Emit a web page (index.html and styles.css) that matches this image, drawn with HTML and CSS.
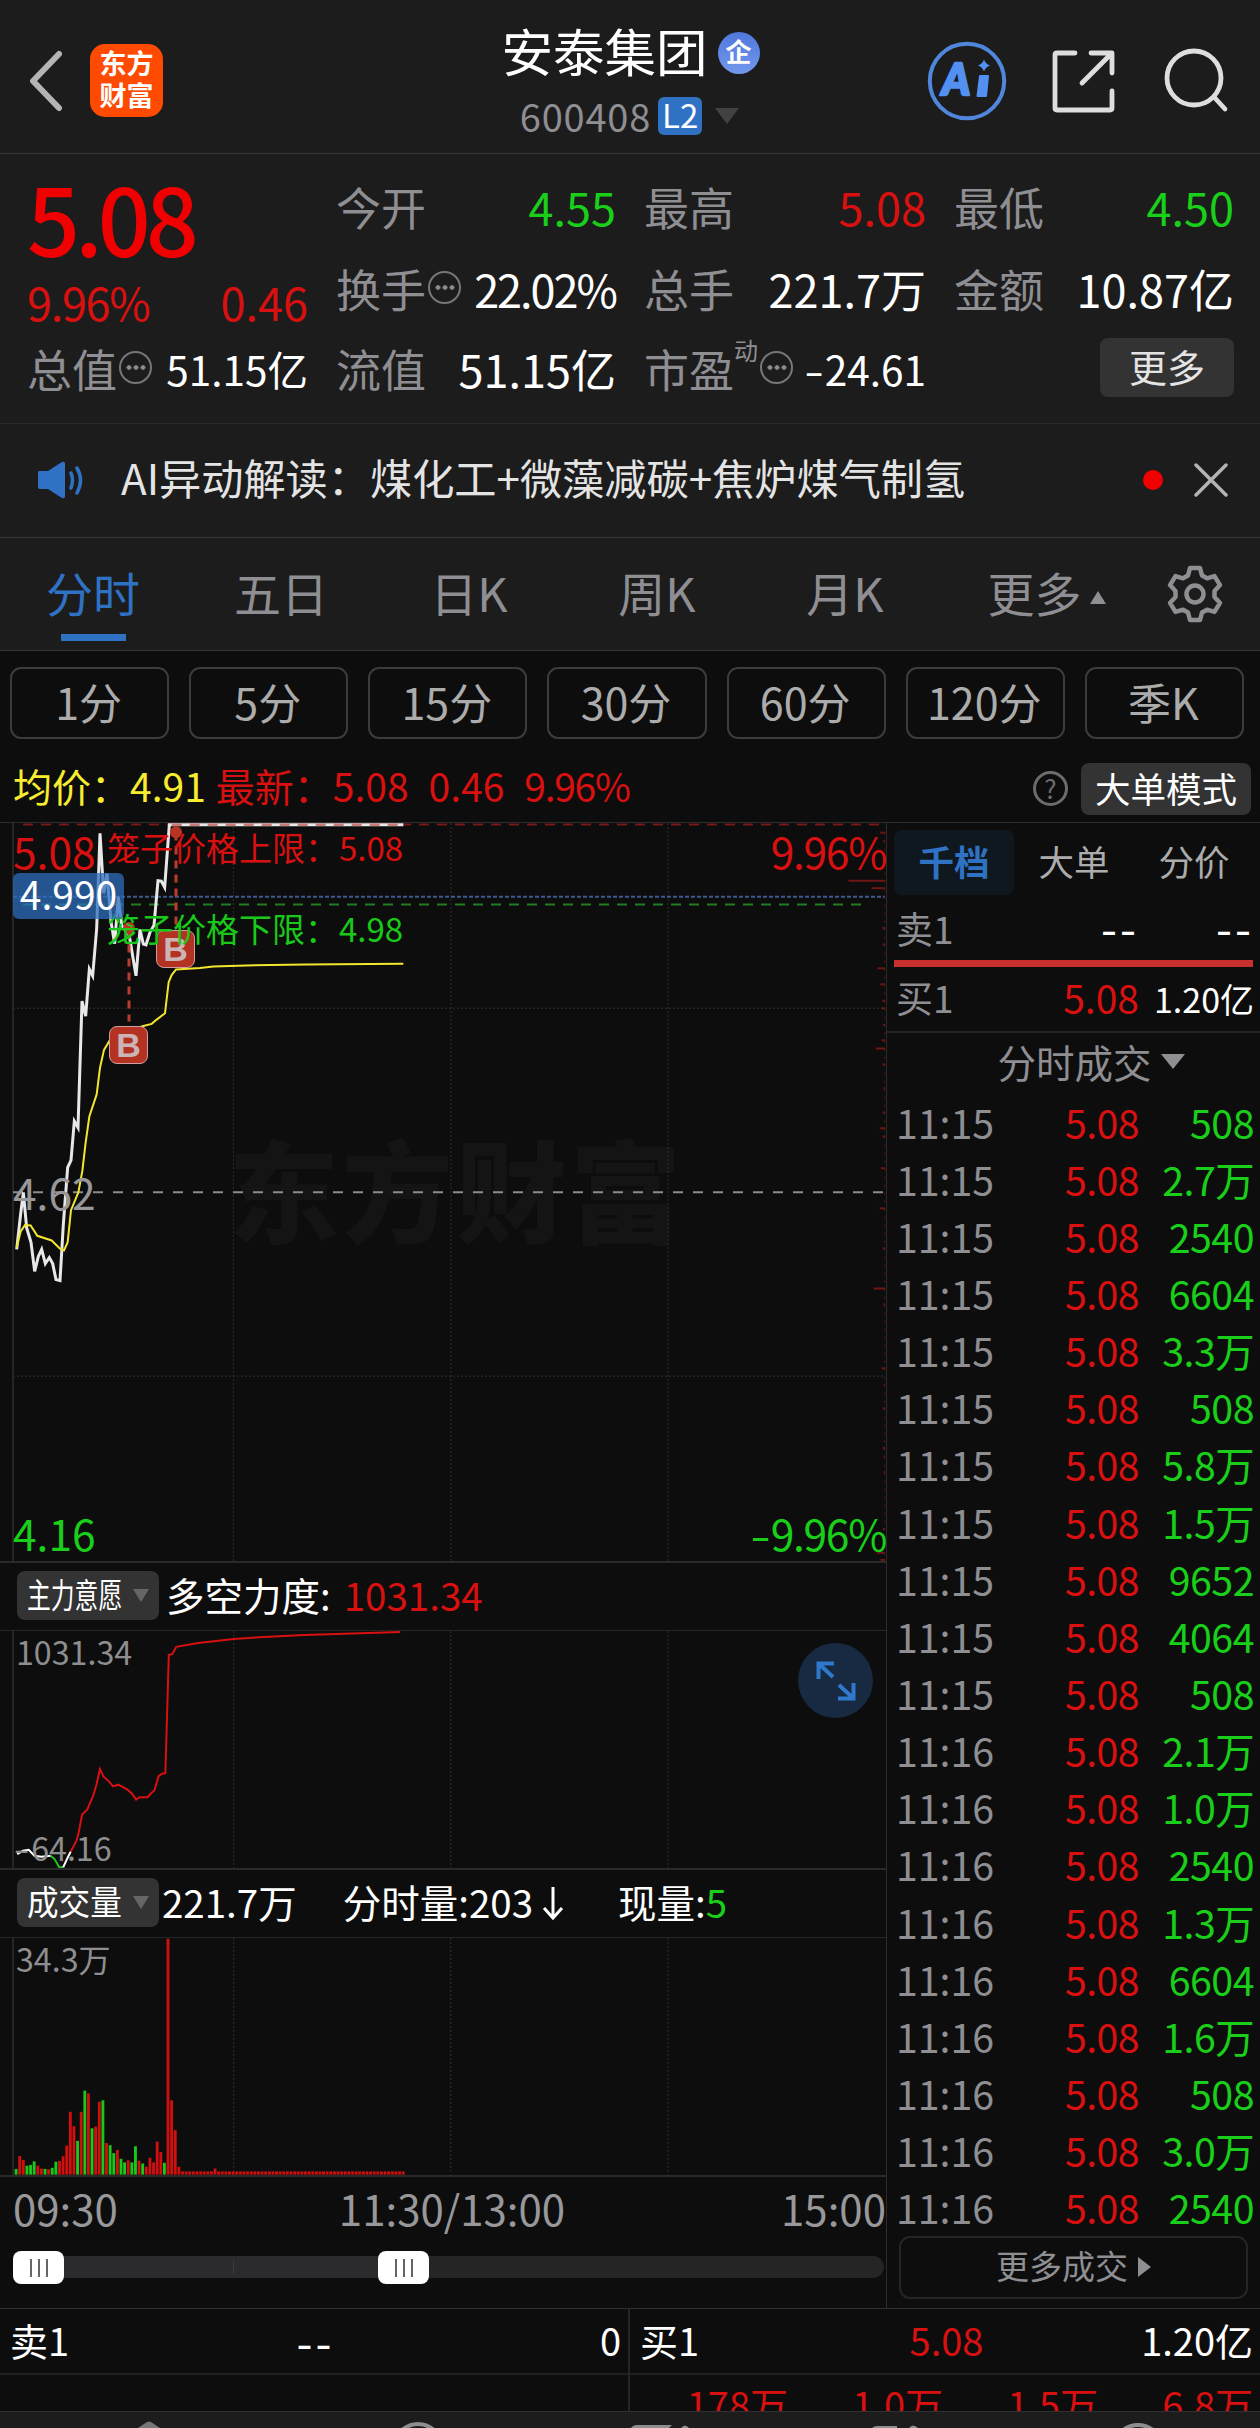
FILE: index.html
```html
<!DOCTYPE html>
<html lang="zh-CN">
<head>
    <meta charset="UTF-8">
    <meta name="viewport" content="width=device-width, initial-scale=1.0">
    <title>安泰集团 600408</title>
    <link rel="stylesheet" href="styles.css">
</head>
<body>
    <header class="header">
        <div class="header-left">
            <svg class="back" width="36" height="62" viewBox="0 0 36 62"><path d="M31 4L5 31L31 58"/></svg>
            <div class="logo"><span>东方</span><span>财富</span></div>
        </div>
        <div class="header-title">
            <div class="name"><span>安泰集团</span><i class="corp">企</i></div>
            <div class="code"><span>600408</span><b class="l2">L2</b><i class="down"></i></div>
        </div>
        <div class="header-right">
            <svg width="80" height="80" viewBox="0 0 80 80">
                <circle cx="40" cy="40" r="37.2" fill="none" stroke="#5087dc" stroke-width="4"/>
                <text class="ai-text" x="15" y="54">A</text>
                <path d="M53 35h8l-2 20h-8.500z" fill="#5290f2" stroke="#5290f2" stroke-width="2" stroke-linejoin="round"/>
                <path d="M57 18.500q1.500 4.500 6 6q-4.500 1.500-6 6q-1.500-4.500-6-6q4.500-1.500 6-6z" fill="#5290f2"/>
            </svg>
            <svg class="line-icon" width="64" height="64" viewBox="0 0 64 64">
                <path d="M24 4H6Q4 4 4 6V59Q4 61 6 61H59Q61 61 61 59V42M40 4H61V24M60 5L31 34"/>
            </svg>
            <svg class="line-icon" width="68" height="68" viewBox="0 0 68 68">
                <circle cx="31" cy="31" r="27"/><path d="M51 50L62 62"/>
            </svg>
        </div>
    </header>

    <section class="quote">
        <div class="price">
            <div class="last">5.08</div>
            <div class="change"><span class="change-pct">9.96%</span><span>0.46</span></div>
        </div>
        <div class="item"><label>今开</label><b class="green">4.55</b></div>
        <div class="item"><label>最高</label><b class="red">5.08</b></div>
        <div class="item"><label>最低</label><b class="green">4.50</b></div>
        <div class="item"><label>换手</label><i class="dots"></i><b class="pct">22.02%</b></div>
        <div class="item"><label>总手</label><b>221.7万</b></div>
        <div class="item"><label>金额</label><b>10.87亿</b></div>
        <div class="item"><label>总值</label><i class="dots"></i><b class="small">51.15亿</b></div>
        <div class="item"><label>流值</label><b>51.15亿</b></div>
        <div class="item"><label>市盈</label><sup>动</sup><i class="dots"></i><b class="small"><span class="minus">-</span>24.61</b></div>
        <div class="item"><button class="more">更多</button></div>
    </section>

    <section class="notice">
        <svg width="48" height="40" viewBox="0 0 48 40">
            <path d="M2 11Q1 11 1 13V27Q1 29 3 29H11L25 38Q28 39 28 36V4Q28 1 25 2L11 11Z" fill="#2f72c4"/>
            <path d="M34 13Q37 20 34 28M40 8Q47 20 40 33" fill="none" stroke="#2f72c4" stroke-width="3.500" stroke-linecap="round"/>
        </svg>
        <p>AI异动解读：煤化工+微藻减碳+焦炉煤气制氢</p>
        <i class="dot"></i>
        <svg class="close" width="34" height="34" viewBox="0 0 34 34"><path d="M2 2L32 32M32 2L2 32"/></svg>
    </section>

    <nav class="tabs">
        <a class="active">分时</a>
        <a>五日</a>
        <a>日K</a>
        <a>周K</a>
        <a>月K</a>
        <a>更多<i class="up"></i></a>
        <svg class="gear" width="60" height="60" viewBox="0 0 60 60">
            <path d="M25 4h10l2 7.500l5 2.800l7.500-2.200l5.500 9l-5.500 6v5.800l5.500 6l-5.500 9l-7.500-2.200l-5 2.800l-2 7.500h-10l-2-7.500l-5-2.800l-7.500 2.200l-5.500-9l5.500-6v-5.800l-5.500-6l5.500-9l7.500 2.200l5-2.800z"/>
            <circle cx="30" cy="30" r="8.500"/>
        </svg>
    </nav>

    <div class="periods">
        <button>1分</button>
        <button>5分</button>
        <button>15分</button>
        <button>30分</button>
        <button>60分</button>
        <button>120分</button>
        <button>季K</button>
    </div>

    <div class="info">
        <span class="yellow">均价：4.91</span>
        <span class="red latest">最新：5.08</span>
        <span class="red">0.46</span>
        <span class="red change-pct">9.96%</span>
        <i class="help">?</i>
        <button class="mode">大单模式</button>
    </div>

    <main class="main">
        <div class="charts">
            <div class="chart trend">
                <div class="watermark">东方财富</div>
                <svg class="plot" viewBox="0 63 2658 2072" preserveAspectRatio="none">
                    <g class="grid">
                        <path d="M700 63V2135M1353 63V2135M2004 63V2135M39 583H2655M39 1616H2655"/>
                    </g>
                    <path class="mid" d="M39 1100H2655"/>
                    <path class="limit" d="M69 67H2655"/>
                    <path class="cursor" d="M39 270H2655"/>
                    <path class="floor" d="M69 292H2600"/>
                    <g id="ticks"></g>
                    <polyline class="white-line" points="50,1260 62,1160 70,1100 80,1200 93,1240 104,1322 115,1280 125,1260 136,1300 148,1283 158,1300 168,1345 180,1348 190,1190 203,1030 213,1010 223,900 234,918 246,563 257,605 268,473 278,492 290,360 300,92 311,260 321,205 333,340 344,402 355,270 365,350 388,380 408,492 420,362 430,403 438,405 450,370 462,350 474,225 484,226 494,244 508,68 1210,68"/>
                    <path class="cap-dash" d="M515 68H1210"/>
                    <polyline class="avg-line" points="50,1255 62,1210 75,1192 92,1193 112,1222 155,1235 180,1258 192,1263 203,1240 213,1150 235,1100 247,1040 257,960 268,887 290,825 300,750 312,700 330,672 360,652 430,633 455,627 470,615 495,597 506,510 515,490 528,474 600,470 640,466 740,463 915,460 1210,458"/>
                    <path class="buy-dash" d="M528 90V350M387 365V620"/>
                    <ellipse cx="528" cy="89" rx="18" ry="17" fill="#b93422"/>
                    <ellipse cx="387" cy="358" rx="18" ry="17" fill="#b93422"/>
                </svg>
                <span class="buy buy-1">B</span>
                <span class="buy buy-2">B</span>
                <span class="lab high red">5.08</span>
                <span class="lab high-pct change-pct red">9.96%</span>
                <span class="lab base">4.62</span>
                <span class="lab low green">4.16</span>
                <span class="lab low-pct change-pct green"><span class="minus">-</span>9.96%</span>
                <span class="cage cage-up">笼子价格上限：<b>5.08</b></span>
                <span class="cage cage-down">笼子价格下限：<b>4.98</b></span>
                <span class="cursor-tag">4.990</span>
            </div>

            <div class="sub-head">
                <button class="select"><span class="narrow-4">主力意愿</span><i></i></button>
                <span class="force">多空力度:</span><span class="red">1031.34</span>
            </div>
            <div class="chart force-chart">
                <svg class="plot" viewBox="0 810 1543 717" preserveAspectRatio="none">
                    <g class="grid"><path d="M407 810V1527M785 810V1527M1163 810V1527"/></g>
                    <g class="force-line">
                        <polyline stroke="#d81010" points="123,1478 133,1445 137,1420 143,1365 152,1350 162,1310 168,1275 174,1228 180,1250 188,1262 197,1280 206,1275 222,1290 230,1302 237,1320 243,1313 257,1313 262,1303 269,1292 276,1250 282,1242 288,1240 294,882 300,880 307,858 345,846 407,834 460,828 530,822 600,818 697,813"/>
                        <polyline stroke="#19c819" points="88,1490 95,1500 103,1524 110,1525"/>
                        <polyline stroke="#fff" points="30,1485 40,1475 50,1472 60,1490 72,1493 88,1490"/>
                        <polyline stroke="#fff" points="110,1525 118,1495 123,1478"/>
                    </g>
                </svg>
                <span class="scale scale-top">1031.34</span>
                <span class="scale scale-bottom"><span class="minus">-</span>64.16</span>
                <span class="expand">
                    <svg width="40" height="40" viewBox="0 0 40 40"><path d="M2.500 18V2.500H18M3 3L17 16M37.500 22V37.500H22M37 37L23 24"/></svg>
                </span>
            </div>

            <div class="sub-head volume-head">
                <button class="select"><span class="narrow-3">成交量</span><i></i></button>
                <span class="total">221.7万</span>
                <span class="minute">分时量:203<svg width="24" height="36" viewBox="0 0 24 36"><path d="M12 2V32M3 23L12 33L21 23"/></svg></span>
                <span>现量:<span class="green">5</span></span>
            </div>
            <div class="chart volume-chart">
                <svg class="plot" viewBox="0 213 1543 660" preserveAspectRatio="none">
                    <g class="grid"><path d="M407 213V873M785 213V873M1163 213V873"/></g>
                    <g id="bars"></g>
                </svg>
                <span class="scale scale-top">34.3万</span>
            </div>
            <div class="times"><span>09:30</span><span>11:30/13:00</span><span>15:00</span></div>
            <div class="slider">
                <div class="range"><i class="thumb"></i><i class="thumb"></i></div>
            </div>
        </div>

        <aside class="side">
            <div class="side-tabs"><a class="on">千档</a><a>大单</a><a>分价</a></div>
            <div class="level sell"><span>卖1</span><b>--</b><b>--</b></div>
            <div class="ratio"></div>
            <div class="level"><span>买1</span><b class="red">5.08</b><b class="amount">1.20亿</b></div>
            <div class="deals-title">分时成交<i></i></div>
            <div class="deals" id="deals"></div>
            <button class="more-deals">更多成交<i></i></button>
        </aside>
    </main>

    <section class="book">
        <div class="book-side">
            <div class="book-row"><span>卖1</span><span class="dash">--</span><span>0</span></div>
        </div>
        <div class="book-side">
            <div class="book-row"><span>买1</span><span class="red">5.08</span><span>1.20亿</span></div>
            <div class="queue"><span>178万</span><span>1.0万</span><span>1.5万</span><span>6.8万</span></div>
        </div>
    </section>

    <footer class="bottom-bar">
        <svg width="1260" height="16" viewBox="0 0 1260 16">
            <path d="M138 16L147 10Q149 9 151 10L160 16Z" fill="#77777a"/>
            <circle cx="418" cy="36" r="24"/>
            <path d="M631 16Q633 13 637 13H672L669 16ZM681 16Q685 11 689 16Z" fill="#8e8e90"/>
            <path d="M872 16Q874 14 877 14H897V16ZM909 16Q913 11 918 16Z" fill="#8e8e90"/>
            <circle cx="1138" cy="37" r="24"/>
        </svg>
    </footer>

    <script>
        const deals = [
            ['11:15','508'],['11:15','2.7万'],['11:15','2540'],['11:15','6604'],['11:15','3.3万'],
            ['11:15','508'],['11:15','5.8万'],['11:15','1.5万'],['11:15','9652'],['11:15','4064'],
            ['11:15','508'],['11:16','2.1万'],['11:16','1.0万'],['11:16','2540'],['11:16','1.3万'],
            ['11:16','6604'],['11:16','1.6万'],['11:16','508'],['11:16','3.0万'],['11:16','2540']
        ]
        let rows = ''
        for(let [time, vol] of deals){
            rows += `<div class="deal"><span>${time}</span><b class="red">5.08</b><b class="green">${vol}</b></div>`
        }
        document.querySelector('#deals').innerHTML = rows

        // r = up, g = down, number = top of the bar
        let volume = 'g856 r820 r831 g847 g845 g835 r847 r855 g856 r857 g853 g836 r834 r821 r791 r697 r737 g778 r697 g638 r646 g743 r738 r669 g665 r784 g790 g812 r803 g828 g838 r832 g838 g793 r833 g841 r850 r825 r838 r780 r809 g839 r215 r665 r748 r850'.split(' ')
        while(volume.length < 108){
            volume.push(volume.length === 55 ? 'r855' : 'r863')
        }
        let bars = ''
        volume.forEach((v, i)=>{
            const top = Number(v.slice(1))
            const color = v[0] === 'g' ? '#19c819' : '#d00f0f'
            bars += `<rect x="${25.5 + i * 6.3}" y="${top}" width="5" height="${872 - top}" fill="${color}"/>`
        })
        document.querySelector('#bars').innerHTML = bars

        // price distribution on the right edge, [y, length]
        const ticks = [[90,14],[113,5],[225,110],[246,40],[358,8],[404,6],[471,22],[516,14],[562,8],[583,10],[630,6],[673,10],[696,28],[741,8],[808,5],[876,6],[920,16],[943,8],[1032,12],[1145,16],[1257,6],[1370,34],[1415,5],[1594,10],[1640,4],[1706,6],[1818,6],[1842,4],[1886,4],[2045,6],[2112,24],[2132,14]]
        let marks = ''
        for(let [y, len] of ticks){
            marks += `<path d="M${2655 - len} ${y}H2655"/>`
        }
        marks += '<path class="tick-line" d="M2654 90V2120"/>'
        document.querySelector('#ticks').innerHTML = marks
    </script>
</body>
</html>
```
FILE: styles.css
```css
*{
    box-sizing: border-box;
}
body{
    margin: 0;
    width: 1260px;
    height: 2428px;
    overflow: hidden;
    background-color: #0d0d0d;
    color: white;
    font-family: "Noto Sans CJK SC", "Noto Sans", sans-serif;
    display: flex;
    flex-direction: column;
}
i, em{
    font-style: normal;
}
b{
    font-weight: 400;
}
button{
    font-family: inherit;
    border: none;
    padding: 0;
    color: inherit;
    background: none;
    display: flex;
    align-items: center;
    justify-content: center;
}
.red{
    color: #d81010;
}
.green{
    color: #19cf19;
}
.yellow{
    color: #f8ec30;
}
.pct{
    letter-spacing: -2px;
}
.change-pct{
    letter-spacing: -1.3px;
}
.minus{
    display: inline-block;
    transform: scaleX(1.4);
    margin-right: 4px;
}

/* header */
.header{
    height: 154px;
    flex: none;
    background-color: #1c1c1c;
    border-bottom: 1px solid #363636;
    display: flex;
    justify-content: space-between;
    padding: 0 29px 0 28px;
}
.header-left, .header-right{
    width: 312px;
    display: flex;
    align-items: center;
    padding-top: 8px;
}
.header-left{
    gap: 26px;
}
.header-right{
    justify-content: flex-end;
}
.header-right svg:nth-child(2){
    margin: 0 48px 0 44px;
}
.back path, .close path{
    fill: none;
    stroke: #b4b4b6;
    stroke-width: 6;
    stroke-linecap: round;
    stroke-linejoin: round;
}
.logo{
    width: 73px;
    height: 73px;
    border-radius: 15px;
    background-color: #ff4a02;
    display: flex;
    flex-direction: column;
    align-items: center;
    justify-content: center;
    font-size: 27px;
    font-weight: 700;
    line-height: 32px;
    padding-bottom: 4px;
}
.header-title{
    display: flex;
    flex-direction: column;
    align-items: center;
    padding-top: 17px;
}
.name{
    display: flex;
    align-items: center;
    font-size: 51.5px;
    line-height: 66px;
    margin-left: 2px;
}
.corp{
    width: 42px;
    height: 42px;
    border-radius: 50%;
    background: linear-gradient(#5078dc, #7298ec);
    font-size: 26px;
    font-weight: 700;
    line-height: 38px;
    text-align: center;
    margin: 6px 0 0 10px;
}
.code{
    display: flex;
    align-items: center;
    font-size: 38px;
    line-height: 54px;
    margin: 6px 0 0 0;
    color: #8e8e93;
    letter-spacing: .8px;
}
.l2{
    width: 44px;
    height: 38px;
    margin-left: 7px;
    border-radius: 6px;
    background-color: #2f72c4;
    color: white;
    font-size: 33px;
    line-height: 34px;
    text-align: center;
    letter-spacing: 0;
}
.down{
    border: 12px solid transparent;
    border-top: 16px solid #424242;
    border-bottom: none;
    margin-left: 13px;
}
.ai-text{
    font-family: Lato, sans-serif;
    font-weight: 900;
    font-style: italic;
    font-size: 43px;
    fill: #5290f2;
    stroke: #5290f2;
    stroke-width: 2.5;
    stroke-linejoin: round;
}
.line-icon{
    fill: none;
    stroke: #dedede;
    stroke-width: 4.8;
    stroke-linecap: round;
    stroke-linejoin: round;
}

/* quote */
.quote{
    height: 270px;
    flex: none;
    background-color: #1c1c1c;
    border-bottom: 1px solid #292929;
    padding: 12px 26px 0 27px;
    display: grid;
    grid-template-columns: 281px 280px 282px 280px;
    grid-template-rows: 82px 81px 80px;
    column-gap: 28px;
}
.price{
    grid-row: span 2;
    color: #d81010;
    font-size: 45px;
}
.last{
    font-size: 93px;
    font-weight: 500;
    line-height: 101px;
    letter-spacing: -5px;
    color: #f00000;
}
.change{
    display: flex;
    justify-content: space-between;
    line-height: 70px;
}
.item{
    display: flex;
    align-items: center;
    font-size: 45px;
    line-height: 60px;
}
.item label{
    color: #8e8e93;
}
.item b{
    margin-left: auto;
}
.item .small{
    font-size: 40.5px;
}
.item sup{
    font-size: 24px;
    line-height: 24px;
    color: #8e8e93;
    align-self: flex-start;
    margin-top: 9px;
}
.dots{
    width: 33px;
    height: 33px;
    flex: none;
    margin: -3px 0 0 2px;
    border: 2.5px solid #77777a;
    border-radius: 50%;
    background: radial-gradient(circle, #8e8e93 2px, transparent 2.5px) center / 7px 7px content-box no-repeat;
    background-repeat: repeat-x;
    padding: 10px 3.5px;
}
.more{
    width: 134px;
    height: 59px;
    margin: -4px 0 0 auto;
    border-radius: 8px;
    background-color: #333;
    color: #e4e4e4;
    font-size: 38px;
    padding-bottom: 4px;
}

/* notice */
.notice{
    height: 114px;
    flex: none;
    background-color: #1c1c1c;
    border-bottom: 1px solid #363636;
    display: flex;
    align-items: center;
    padding: 0 32px 2px 37px;
}
.notice p{
    margin: 0 auto 6px 36px;
    font-size: 42.2px;
    color: #e4e4e4;
}
.dot{
    width: 20px;
    height: 20px;
    border-radius: 50%;
    background-color: #f00000;
    margin-right: 31px;
}
.close path{
    stroke-width: 3.5;
}

/* tabs */
.tabs{
    height: 113px;
    flex: none;
    background-color: #1c1c1c;
    border-bottom: 1px solid #363636;
    display: flex;
    align-items: center;
}
.tabs a{
    width: 188px;
    height: 112px;
    line-height: 107px;
    text-align: center;
    font-size: 47px;
    color: #8e8e93;
    text-indent: -2px;
}
.tabs a:nth-child(6){
    width: 215px;
}
.tabs .active{
    color: #2f72c4;
    background: linear-gradient(#2f72c4, #2f72c4) 61px 96px / 65px 7px no-repeat;
}
.up{
    display: inline-block;
    border: 8px solid transparent;
    border-bottom: 13px solid #8e8e93;
    border-top: none;
    margin: 0 0 8px 8px;
}
.gear{
    margin-left: 10px;
    fill: none;
    stroke: #8e8e93;
    stroke-width: 4.5;
    stroke-linejoin: round;
}
.periods{
    display: flex;
    gap: 20px;
    padding: 16px 16px 0 10px;
    height: 88px;
    flex: none;
}
.periods button{
    flex: 1;
    height: 72px;
    border: 2px solid #3c3c3c;
    border-radius: 11px;
    color: #acacac;
    font-size: 43px;
    line-height: 60px;
    padding: 0 2px 4px 0;
}
.info{
    height: 83px;
    flex: none;
    display: flex;
    align-items: center;
    gap: 20px;
    padding: 8px 9px 0 13px;
    font-size: 39px;
}
.latest{
    margin-left: -10px;
}
.help{
    width: 35px;
    height: 35px;
    border: 3px solid #6c6c6e;
    border-radius: 50%;
    color: #6c6c6e;
    font-size: 26px;
    line-height: 27px;
    text-align: center;
    margin: 7px -7px 0 auto;
}
.mode{
    width: 170px;
    height: 52px;
    margin-top: 8px;
    border-radius: 8px;
    background-color: #333;
    font-size: 35.5px;
    padding-bottom: 3px;
}

/* charts */
.main{
    height: 1486px;
    flex: none;
    display: flex;
    border-top: 1px solid #2c2c2c;
}
.charts{
    width: 887px;
    border-right: 1px solid #2c2c2c;
}
.chart{
    position: relative;
    border-bottom: 2px solid #2a2a2a;
}
.chart::before{
    content: "";
    position: absolute;
    left: 12px;
    top: 0;
    bottom: 0;
    width: 2px;
    background-color: #252525;
}
.plot{
    display: block;
    width: 886px;
    height: 100%;
    position: relative;
}
.plot *{
    vector-effect: non-scaling-stroke;
}
.grid path{
    stroke: #303030;
    stroke-width: 1;
    stroke-dasharray: 2 2;
    fill: none;
}
.trend{
    height: 740px;
}
.watermark{
    position: absolute;
    left: 228px;
    top: 294px;
    font-size: 111px;
    line-height: 140px;
    font-weight: 900;
    letter-spacing: 3px;
    color: #141414;
}
.mid{
    stroke: #8c8c8c;
    stroke-width: 2;
    stroke-dasharray: 10 10;
}
.limit{
    stroke: #781818;
    stroke-width: 2;
    stroke-dasharray: 10 8;
}
.cursor{
    stroke: #3c5a8c;
    stroke-width: 2;
    stroke-dasharray: 4 2;
}
.floor{
    stroke: #237d23;
    stroke-width: 2;
    stroke-dasharray: 10 8;
}
#ticks path{
    stroke: #701414;
    stroke-width: 2;
}
#ticks .tick-line{
    stroke-width: 1;
    stroke-dasharray: 2 6;
}
.white-line{
    fill: none;
    stroke: #e8e8e8;
    stroke-width: 3;
}
.cap-dash{
    stroke: #c87d7a;
    stroke-width: 2.6;
    stroke-dasharray: 10 8;
}
.avg-line{
    fill: none;
    stroke: #f3e62e;
    stroke-width: 2;
}
.buy-dash{
    stroke: #b93c2c;
    stroke-width: 3;
    stroke-dasharray: 8 6;
}
.buy{
    position: absolute;
    width: 39px;
    height: 38px;
    border: 1.5px solid #d0a0a0;
    border-radius: 8px;
    background-color: #b43222;
    color: #ccb4b6;
    font-family: "Liberation Sans", sans-serif;
    font-weight: 700;
    font-size: 34px;
    line-height: 36px;
    text-align: center;
}
.buy-1{
    left: 156px;
    top: 107px;
}
.buy-2{
    left: 109px;
    top: 203px;
}
.lab{
    position: absolute;
    font-size: 42.5px;
    line-height: 50px;
}
.high, .base, .low{
    left: 13px;
}
.high-pct, .low-pct{
    right: 0;
}
.high, .high-pct{
    top: 3px;
}
.base{
    top: 344px;
    color: #98989a;
}
.low, .low-pct{
    top: 685px;
}
.cage{
    position: absolute;
    left: 107px;
    font-size: 33px;
    line-height: 40px;
    white-space: nowrap;
}
.cage b{
    margin-left: 1px;
}
.cage-up{
    top: 4px;
    color: #d81010;
}
.cage-down{
    top: 85px;
    color: #19c819;
}
.cursor-tag{
    position: absolute;
    left: 13px;
    top: 50px;
    width: 111px;
    height: 46px;
    border-radius: 6px;
    background-color: rgba(46, 110, 190, .75);
    font-size: 39px;
    line-height: 40px;
    text-align: center;
}
.sub-head{
    height: 67px;
    display: flex;
    align-items: center;
    padding: 0 0 6px 17px;
    font-size: 38.5px;
    line-height: 56px;
}
.select{
    width: 142px;
    height: 49px;
    border-radius: 8px;
    background-color: #333;
    font-size: 34px;
    justify-content: flex-start;
    padding: 0 0 4px 10px;
    margin-top: 4px;
}
.select span{
    width: 96px;
    line-height: 44px;
    white-space: nowrap;
    transform-origin: left;
    text-align: left;
}
.narrow-4{
    transform: scaleX(.7);
}
.narrow-3{
    transform: scaleX(.93);
}
.select i{
    border: 8px solid transparent;
    border-top: 13px solid #666;
    border-bottom: none;
    margin: 4px 0 0 10px;
}
.force{
    margin: 0 13px 0 7px;
}
.force-chart, .volume-chart{
    border-top: 1px solid #252525;
    height: 240px;
}
.force-line{
    fill: none;
    stroke-width: 2;
}
.scale{
    position: absolute;
    left: 16px;
    font-size: 32.2px;
    line-height: 36px;
    color: #8e8e90;
}
.scale-top{
    top: 2px;
}
.scale-bottom{
    bottom: 3px;
}
.expand{
    position: absolute;
    left: 798px;
    top: 12px;
    width: 75px;
    height: 75px;
    border-radius: 50%;
    background-color: #172a42;
    display: flex;
    align-items: center;
    justify-content: center;
}
.expand path{
    fill: none;
    stroke: #2f78cc;
    stroke-width: 4;
}
.total{
    margin-left: 3px;
}
.minute{
    display: flex;
    align-items: center;
    margin: 0 53px 0 46px;
}
.minute svg{
    margin: 5px 0 0 8px;
    fill: none;
    stroke: white;
    stroke-width: 3;
}
.times{
    display: flex;
    justify-content: space-between;
    font-size: 42px;
    line-height: 60px;
    padding: 1px 0 0 13px;
    color: #98989a;
}
.times span:nth-child(2){
    margin-left: 5px;
}
.slider{
    height: 22px;
    margin: 18px 2px 0 13px;
    border-radius: 11px;
    background-color: #252525;
}
.range{
    width: 416px;
    height: 22px;
    display: flex;
    justify-content: space-between;
    align-items: center;
    background: linear-gradient(#3c3c3e, #3c3c3e) 220px 4px / 1px 14px no-repeat #2b2b2d;
    border-radius: 11px;
}
.thumb{
    width: 51px;
    height: 33px;
    border-radius: 8px;
    background: repeating-linear-gradient(90deg, #666 0 2px, transparent 2px 8px) 17px 8px / 18px 18px no-repeat white;
}

/* right column */
.side{
    flex: 1;
    padding: 7px 6px 0 7px;
    font-size: 37px;
    color: #8e8e93;
}
.side-tabs{
    display: flex;
    height: 65px;
}
.side-tabs a{
    width: 120px;
    text-align: center;
    line-height: 61px;
    font-size: 35.5px;
    color: #acacac;
}
.side-tabs .on{
    border-radius: 8px;
    background-color: #10181f;
    color: #2f72c4;
    font-weight: 700;
}
.level, .deal{
    display: flex;
    align-items: center;
    padding: 0 0 0 2px;
}
.level{
    height: 58px;
    margin-top: 1px;
}
.level.sell{
    height: 63px;
    margin: 0;
    padding-top: 2px;
}
.level b, .deal b{
    width: 115px;
    text-align: right;
}
.level b:nth-child(2), .deal b:nth-child(2){
    margin-left: auto;
}
.level b:nth-child(2){
    font-size: 39px;
}
.level.sell b, .dash{
    font-size: 46px;
    letter-spacing: 3px;
}
.level.sell b{
    color: white;
    padding-bottom: 4px;
}
.level .amount{
    color: white;
    font-size: 34px;
    margin-top: 2px;
}
.ratio{
    height: 7px;
    background-color: #c83030;
    margin: 2px 1px 0 0;
}
.deals-title{
    margin: 5px -6px 0 -7px;
    border-top: 2px solid #252525;
    height: 62px;
    display: flex;
    align-items: center;
    justify-content: center;
    font-size: 38.5px;
    padding: 0 0 5px 35px;
}
.deals-title i{
    border: 12px solid transparent;
    border-top: 15px solid #8e8e93;
    border-bottom: none;
    margin: 2px 0 0 9px;
}
.deal{
    height: 57.150px;
    font-size: 39.3px;
    line-height: 50px;
}
.deal b:nth-child(2){
    letter-spacing: -.6px;
}
.deal .green{
    letter-spacing: -.5px;
}
.more-deals{
    width: 349px;
    height: 63px;
    margin: 0 0 0 5px;
    border: 2px solid #252525;
    border-radius: 11px;
    color: #8e8e93;
    font-size: 33px;
    padding-bottom: 4px;
}
.more-deals i{
    border: 10px solid transparent;
    border-left: 13px solid #8e8e93;
    border-right: none;
    margin: 3px 0 0 10px;
}

/* order book */
.book{
    display: flex;
    height: 103px;
    flex: none;
    overflow: hidden;
    border-top: 1px solid #303030;
}
.book-side{
    width: 630px;
    font-size: 38px;
}
.book-side:first-child{
    border-right: 2px solid #252525;
    width: 631px;
}
.book-row{
    height: 66px;
    display: grid;
    grid-template-columns: 1fr 1fr 1fr;
    text-align: center;
    line-height: 62px;
    padding: 0 7px 0 10px;
    border-bottom: 2px solid #202020;
}
.book-row span:first-child{
    text-align: left;
}
.book-row span:last-child{
    text-align: right;
}
.queue{
    display: flex;
    padding: 0 7px 0 3px;
    line-height: 58px;
    color: #d81010;
}
.queue span{
    width: 155px;
    text-align: right;
}
.bottom-bar{
    height: 17px;
    flex: none;
    background-color: #1c1c1c;
    border-top: 1px solid #303030;
}
.bottom-bar svg{
    display: block;
}
.bottom-bar circle{
    fill: none;
    stroke: #8e8e90;
    stroke-width: 4;
}
```
